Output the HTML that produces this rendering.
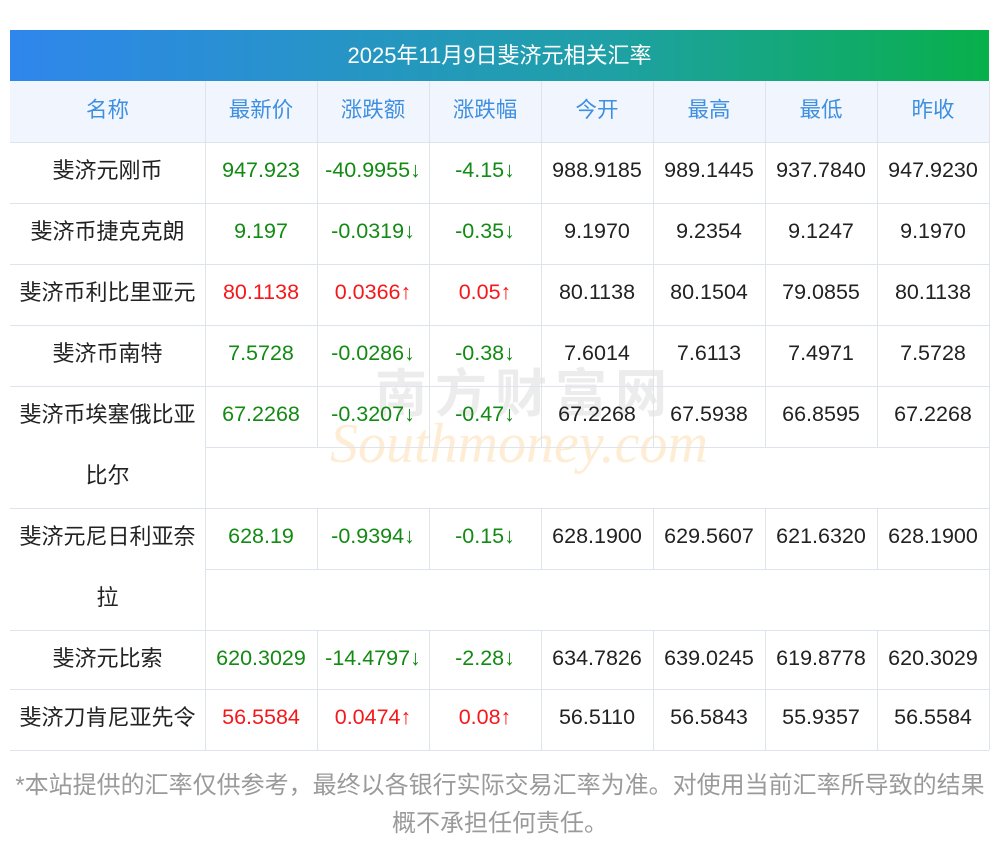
<!DOCTYPE html>
<html><head><meta charset="utf-8"><style>
body{margin:0;background:#fff;width:1000px;height:853px;position:relative;font-family:"Liberation Sans","Noto Sans CJK SC",sans-serif;overflow:hidden}
.t{position:absolute;left:10px;top:30px;width:979px;height:51px;background:linear-gradient(90deg,#2f86ec,#1fa0a8 60%,#08b04a);color:#fff;font-size:22px;text-align:center;line-height:51px}
.hd{position:absolute;left:10px;top:81px;width:979px;height:61px;background:#f1f6fe}
.c{position:absolute;height:61px;line-height:61px;text-align:center;font-size:21.5px;color:#222;white-space:nowrap}
.h{color:#3f8fe0}
.g{color:#138a13}.r{color:#f5181b}
.hl{position:absolute;height:1px;background:#dfe3ec}
.vl{position:absolute;width:1px;background:#dfe3ec}
.n{position:absolute;left:10px;width:195px;text-align:center;font-size:22px;color:#222;line-height:61px}
.f{position:absolute;left:0;width:1000px;top:767px;text-align:center;color:#9a9a9a;font-size:24px;line-height:38px;white-space:nowrap}
.wm{position:absolute;left:375px;top:352px;font-size:52px;color:rgba(200,200,200,.35);letter-spacing:8px;font-weight:bold}
.wm2{position:absolute;left:330px;top:412px;font-size:56px;color:rgba(253,215,160,.45);font-family:"Liberation Serif",serif;font-style:italic}
</style></head><body>
<div class="t">2025年11月9日斐济元相关汇率</div>
<div class="hd"></div>
<div class="wm">南方财富网</div>
<div class="wm2">Southmoney.com</div>
<div id="g"></div>
<div class="f">*本站提供的汇率仅供参考，最终以各银行实际交易汇率为准。对使用当前汇率所导致的结果<br>概不承担任何责任。</div>
<script>
var X=[10,205,317,429,541,653,765,877,989];
var H=["名称","最新价","涨跌额","涨跌幅","今开","最高","最低","昨收"];
var rows=[
["斐济元刚币","947.923","-40.9955↓","-4.15↓","988.9185","989.1445","937.7840","947.9230","g",142,1],
["斐济币捷克克朗","9.197","-0.0319↓","-0.35↓","9.1970","9.2354","9.1247","9.1970","g",203,1],
["斐济币利比里亚元","80.1138","0.0366↑","0.05↑","80.1138","80.1504","79.0855","80.1138","r",264,1],
["斐济币南特","7.5728","-0.0286↓","-0.38↓","7.6014","7.6113","7.4971","7.5728","g",325,1],
["斐济币埃塞俄比亚<br>比尔","67.2268","-0.3207↓","-0.47↓","67.2268","67.5938","66.8595","67.2268","g",386,2],
["斐济元尼日利亚奈<br>拉","628.19","-0.9394↓","-0.15↓","628.1900","629.5607","621.6320","628.1900","g",508,2],
["斐济元比索","620.3029","-14.4797↓","-2.28↓","634.7826","639.0245","619.8778","620.3029","g",630,1],
["斐济刀肯尼亚先令","56.5584","0.0474↑","0.08↑","56.5110","56.5843","55.9357","56.5584","r",689,1]];
var s="";
for(var i=0;i<8;i++)s+='<div class="c h" style="left:'+X[i]+'px;width:'+(X[i+1]-X[i])+'px;top:80px">'+H[i]+'</div>';
s+='<div class="vl" style="left:205px;top:81px;height:669px"></div>';
for(var i=2;i<8;i++)s+='<div class="vl" style="left:'+X[i]+'px;top:81px;height:61px"></div>';
s+='<div class="vl" style="left:989px;top:81px;height:669px"></div>';
rows.forEach(function(r){var y=r[9],k=r[10];
 s+='<div class="n" style="top:'+(y-2)+'px">'+r[0]+'</div>';
 for(var j=1;j<8;j++){var cl=j<=3?r[8]:"";s+='<div class="c '+cl+'" style="left:'+X[j]+'px;width:'+(X[j+1]-X[j])+'px;top:'+(y-2)+'px">'+r[j]+'</div>';}
 for(var j=2;j<8;j++)s+='<div class="vl" style="left:'+X[j]+'px;top:'+y+'px;height:61px"></div>';
 s+='<div class="hl" style="left:10px;width:979px;top:'+y+'px"></div>';
 if(k==2)s+='<div class="hl" style="left:205px;width:784px;top:'+(y+61)+'px"></div>';
});
s+='<div class="hl" style="left:10px;width:979px;top:750px"></div>';
document.getElementById("g").innerHTML=s;
</script>
</body></html>
